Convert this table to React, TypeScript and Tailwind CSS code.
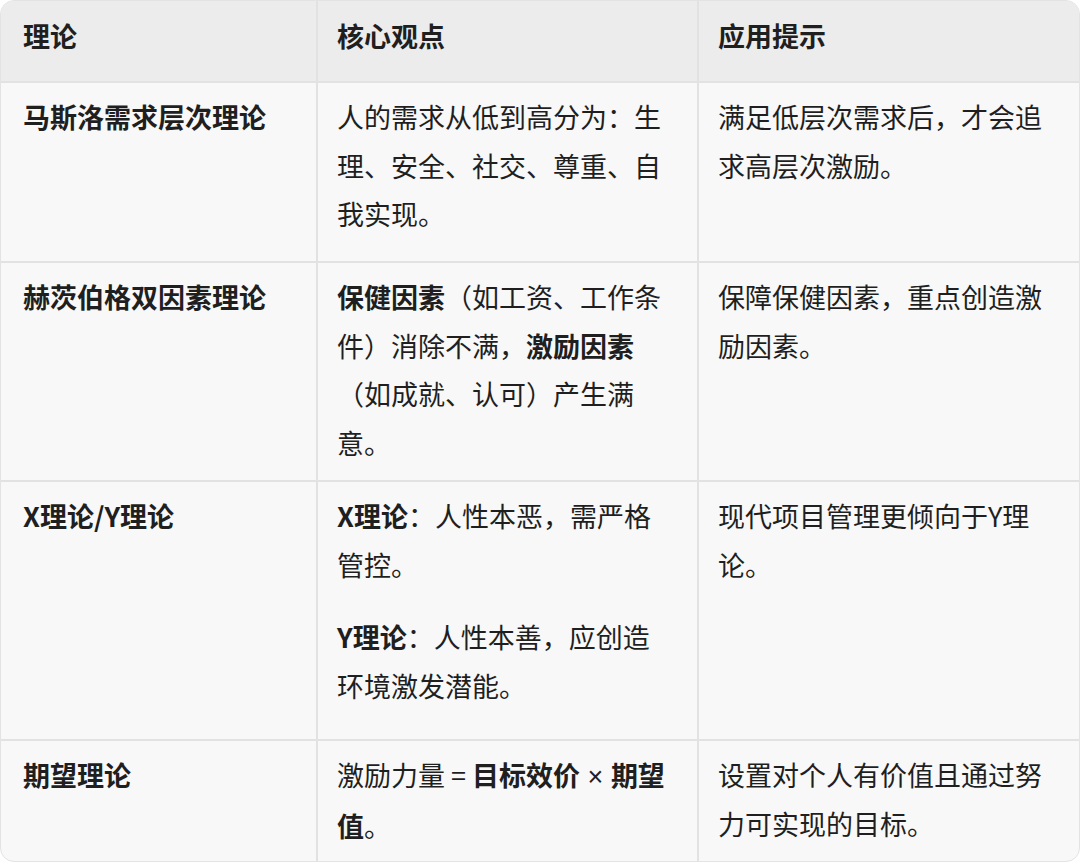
import React from 'react';

const font = { fontFamily: '"Noto Sans CJK SC", "Noto Sans", sans-serif' };

interface Row {
  height: string;
  theory: React.ReactNode;
  core: React.ReactNode;
  tip: React.ReactNode;
}

const rows: Row[] = [
  {
    height: 'h-[180px]',
    theory: '马斯洛需求层次理论',
    core: <p>人的需求从低到高分为：生理、安全、社交、尊重、自我实现。</p>,
    tip: <p>满足低层次需求后，才会追求高层次激励。</p>,
  },
  {
    height: 'h-[219px]',
    theory: '赫茨伯格双因素理论',
    core: (
      <p>
        <strong className="font-semibold">保健因素</strong>（如工资、工作条件）消除不满，
        <strong className="font-semibold">激励因素</strong>（如成就、认可）产生满意。
      </p>
    ),
    tip: <p>保障保健因素，重点创造激励因素。</p>,
  },
  {
    height: 'h-[259px]',
    theory: 'X理论/Y理论',
    core: (
      <div className="space-y-6">
        <p>
          <strong className="font-semibold">X理论</strong>：人性本恶，需严格管控。
        </p>
        <p>
          <strong className="font-semibold">Y理论</strong>：人性本善，应创造环境激发潜能。
        </p>
      </div>
    ),
    tip: <p>现代项目管理更倾向于Y理论。</p>,
  },
  {
    height: 'h-[122px]',
    theory: '期望理论',
    core: (
      <p>
        激励力量 = <strong className="font-semibold">目标效价</strong>
        <span className="font-[Liberation_Sans]"> × </span>
        <strong className="font-semibold">期望值</strong>。
      </p>
    ),
    tip: <p>设置对个人有价值且通过努力可实现的目标。</p>,
  },
];

const cols = 'grid grid-cols-[315px_381px_1fr]';

export default function App() {
  return (
    <div className="w-[1080px] h-[862px] bg-white text-[#1f1f1f] text-[27px] leading-[1.8]" style={font}>
      <div className="h-full rounded-[14px] border border-[#e3e3e3] overflow-hidden bg-[#f8f8f8]">
        {/* header */}
        <div className={`${cols} h-[82px] bg-[#ececec] border-b-2 border-[#e2e2e2] font-semibold`}>
          <div className="pl-[22px] pt-[11px]">理论</div>
          <div className="pl-[19px] pt-[11px] border-l-2 border-[#e2e2e2]">核心观点</div>
          <div className="pl-[19px] pt-[11px] border-l-2 border-[#e2e2e2]">应用提示</div>
        </div>
        {rows.map((row, i) => (
          <div
            key={i}
            className={`${cols} ${row.height} ${i < rows.length - 1 ? 'border-b-2 border-[#e2e2e2]' : ''}`}
          >
            <div className="pl-[22px] pr-4 pt-[10px] font-semibold">{row.theory}</div>
            <div className="pl-[19px] pr-6 pt-[10px] border-l-2 border-[#e2e2e2]">{row.core}</div>
            <div className="pl-[19px] pr-6 pt-[10px] border-l-2 border-[#e2e2e2]">{row.tip}</div>
          </div>
        ))}
      </div>
    </div>
  );
}
